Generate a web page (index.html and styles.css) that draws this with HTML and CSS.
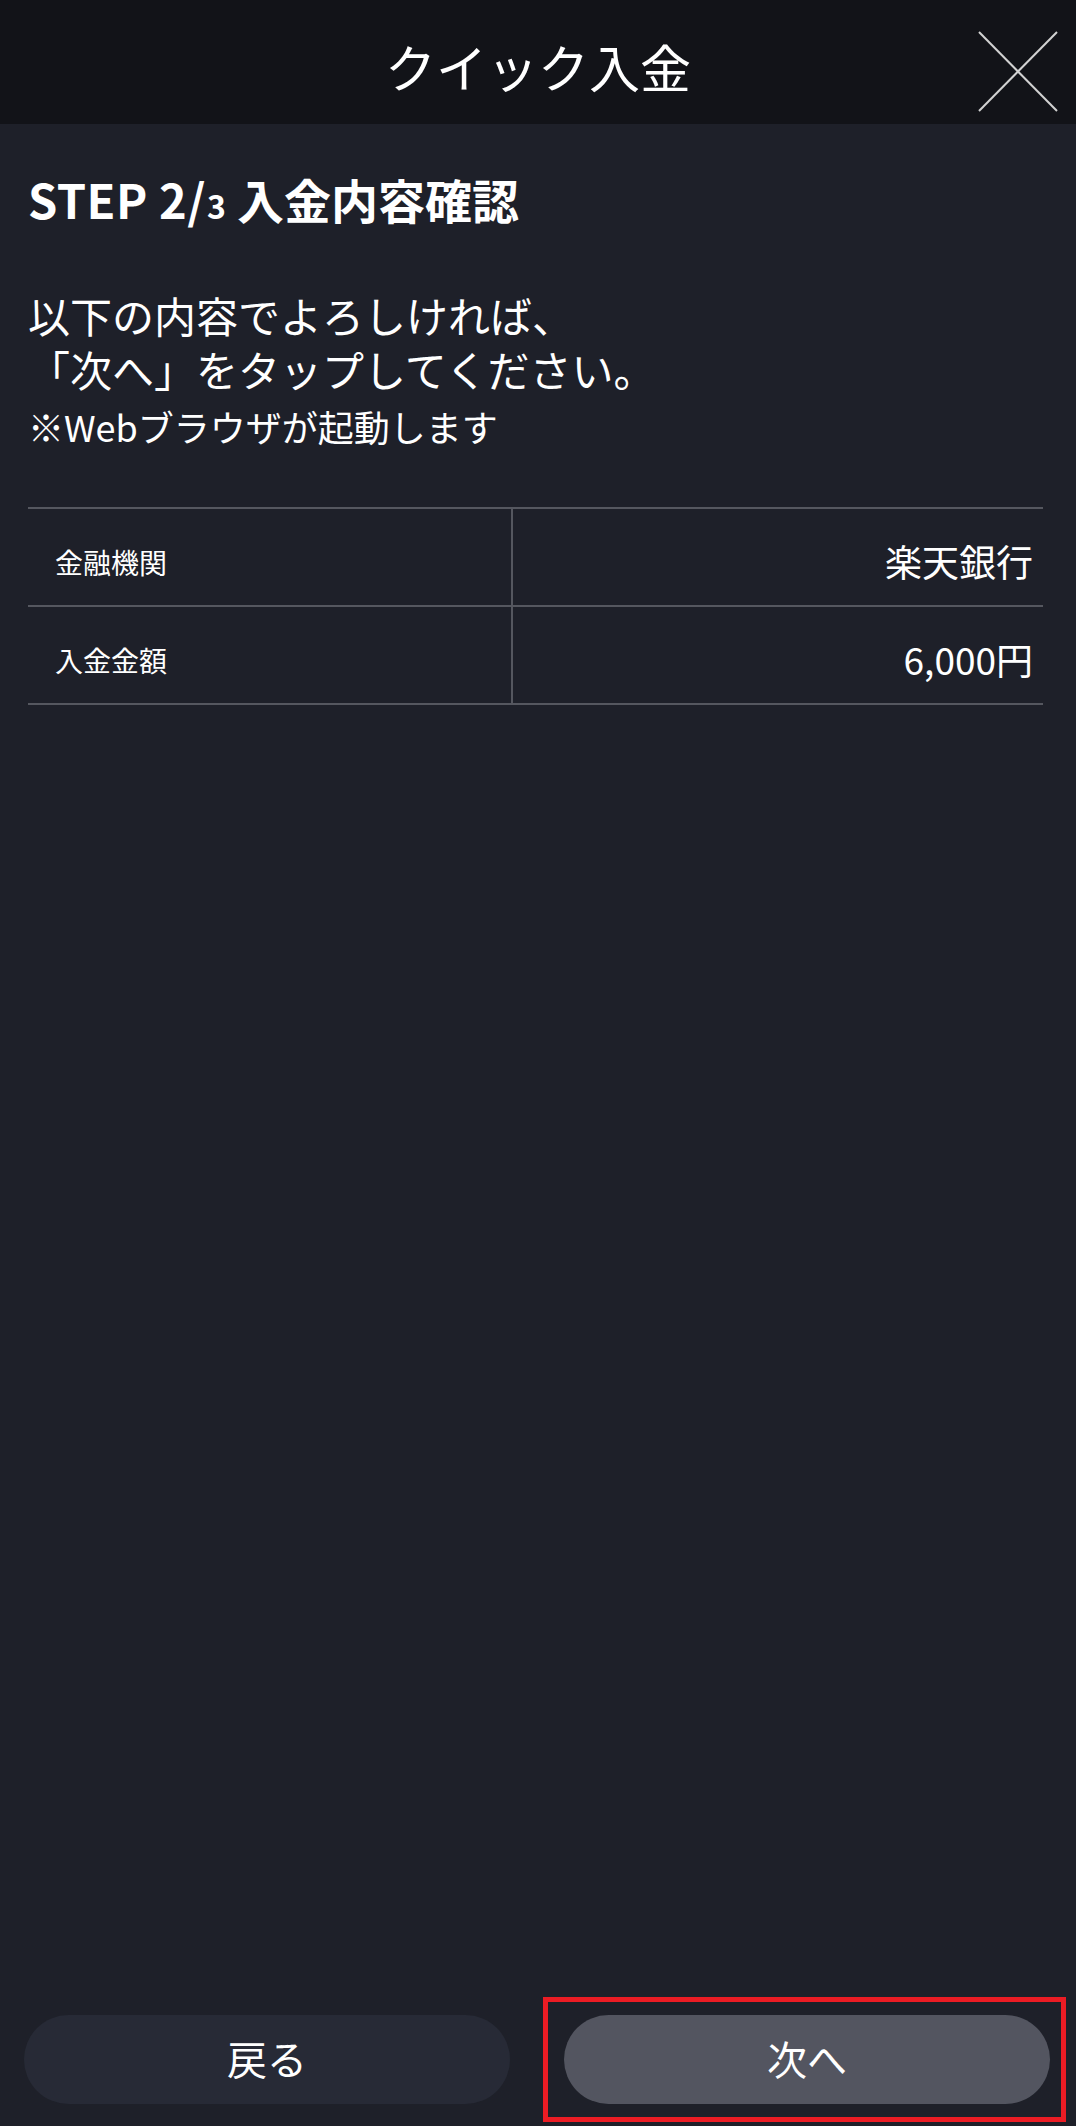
FILE: index.html
```html
<!DOCTYPE html>
<html lang="ja">
<head>
	<meta charset="utf-8">
	<title>クイック入金</title>
	<link rel="stylesheet" href="styles.css">
</head>
<body>
<div class="page">
	<div class="header">
		<span class="header-title">クイック入金</span>
		<svg class="close" width="80" height="81" viewBox="0 0 80 81">
			<line x1="1" y1="1" x2="79" y2="80"/>
			<line x1="79" y1="1" x2="1" y2="80"/>
		</svg>
	</div>

	<div class="content">
		<h1 class="step"><span class="step-num">STEP 2/<span class="step-total">3</span></span> 入金内容確認</h1>
		<p class="lead">以下の内容でよろしければ、<br>「次へ」をタップしてください。</p>
		<p class="note">※Webブラウザが起動します</p>

		<table class="detail">
			<tr>
				<td class="label">金融機関</td>
				<td class="value">楽天銀行</td>
			</tr>
			<tr>
				<td class="label">入金金額</td>
				<td class="value">6,000円</td>
			</tr>
		</table>
	</div>

	<div class="footer">
		<a class="btn btn-back">戻る</a>
		<a class="btn btn-next">次へ<span class="mark"></span></a>
	</div>
</div>
</body>
</html>
```

FILE: styles.css
```css
* {
	box-sizing: border-box;
}

html,
body {
	margin: 0;
	padding: 0;
	background: #1e2029;
	color: #fff;
	font-family: "Noto Sans CJK JP", "Noto Sans", sans-serif;
}

.page {
	display: flex;
	flex-direction: column;
	width: 1076px;
	height: 2126px;
}

.header {
	position: relative;
	height: 124px;
	padding-top: 9px;
	background: #121318;
	text-align: center;
}

.header-title {
	font-size: 51px;
	line-height: 115px;
}

.close {
	position: absolute;
	top: 31px;
	right: 18px;
}

.close line {
	stroke: #d2d2d2;
	stroke-width: 2;
}

.content {
	flex: 1;
	padding: 47px 33px 0 28px;
}

.step {
	margin: 0;
	font-size: 47px;
	font-weight: bold;
	line-height: 55px;
}

.step-num {
	letter-spacing: 0.5px;
}

.step-total {
	font-size: 32px;
	margin-left: 1px;
}

.lead {
	margin: 55px 0 0 0;
	font-size: 42px;
	line-height: 54px;
}

.note {
	margin: 7px 0 0 0;
	font-size: 36px;
	line-height: 47px;
}

.detail {
	width: 1015px;
	margin-top: 57px;
	border-collapse: collapse;
}

.detail td {
	height: 98px;
	padding: 0;
	border-top: 2px solid #55575f;
	border-bottom: 2px solid #55575f;
	vertical-align: middle;
}

.detail .label {
	width: 484px;
	padding: 10px 0 0 27px;
	font-size: 28px;
	border-right: 2px solid #55575f;
}

.detail .value {
	padding: 7px 10px 0 0;
	font-size: 37px;
	text-align: right;
}

.footer {
	display: flex;
	gap: 54px;
	padding: 0 26px 22px 24px;
}

.btn {
	position: relative;
	flex: 1;
	height: 89px;
	border-radius: 45px;
	font-size: 40px;
	line-height: 86px;
	text-align: center;
	color: #fff;
}

.btn-back {
	background: #272a36;
}

.btn-next {
	background: #535560;
}

.mark {
	position: absolute;
	top: -18px;
	right: -16px;
	bottom: -18px;
	left: -21px;
	border: 5px solid #ec1c24;
}
```
